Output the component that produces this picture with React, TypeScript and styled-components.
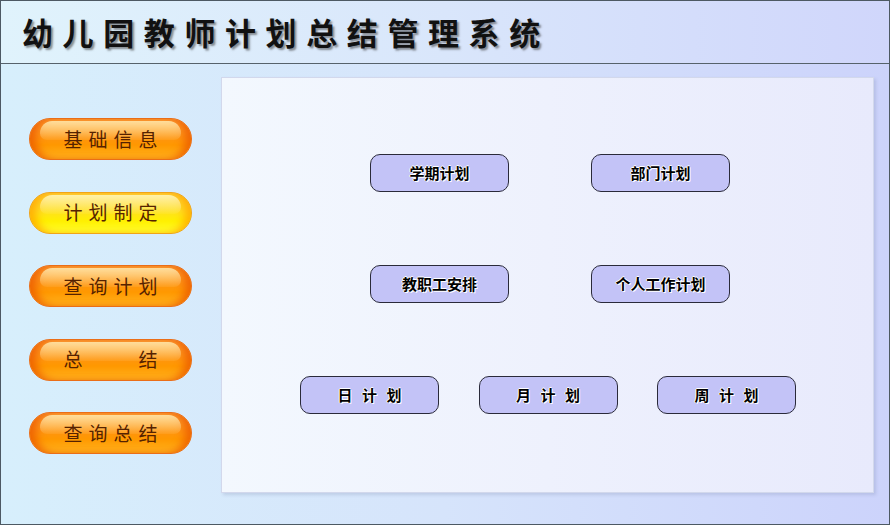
import { FC } from "react";
import styled, { createGlobalStyle } from "styled-components";

const GlobalStyle = createGlobalStyle`
  html, body {
    margin: 0;
    padding: 0;
    background: #ffffff;
  }
  * {
    box-sizing: border-box;
  }
`;

const Frame = styled.div`
  width: 890px;
  height: 525px;
  border: 1px solid #4d5963;
  display: flex;
  flex-direction: column;
  font-family: "Noto Sans CJK SC", "Noto Sans", sans-serif;
  overflow: hidden;
`;

const Header = styled.header`
  height: 63px;
  flex-shrink: 0;
  display: flex;
  align-items: center;
  padding-left: 21px;
  padding-bottom: 2px;
  background: linear-gradient(to right, #e0f3fc 0%, #d9e6fb 50%, #d0d6fb 100%);
  border-bottom: 1px solid #56626b;
`;

const Title = styled.h1`
  margin: 0;
  font-size: 31px;
  font-weight: 700;
  letter-spacing: 9.6px;
  color: #111;
  text-shadow: 2px 2px 2px rgba(60, 60, 60, 0.55);
`;

const Body = styled.div`
  flex: 1;
  display: flex;
  padding: 13px 15px 31px 28px;
  background: linear-gradient(to right, #d7effc 0%, #d6e4fb 50%, #ccd3fb 100%);
`;

const Menu = styled.nav`
  width: 163px;
  flex-shrink: 0;
  display: flex;
  flex-direction: column;
  gap: 31.5px;
  padding-top: 41px;
`;

const MenuButton = styled.button<{ active?: boolean }>`
  position: relative;
  width: 163px;
  height: 42px;
  border-radius: 21px;
  border: 1px solid ${({ active }) => (active ? "#f0a418" : "#ea6e18")};
  background: ${({ active }) =>
    active
      ? "linear-gradient(to bottom, #ffd23a 0%, #ffe020 45%, #fff000 70%, #ffff30 100%)"
      : "linear-gradient(to bottom, #ffa53a 0%, #ff9410 45%, #ff9800 65%, #ffb41e 100%)"};
  box-shadow: ${({ active }) =>
    active
      ? "inset 9px 0 9px -3px rgba(255, 165, 0, 0.8), inset -9px 0 9px -3px rgba(255, 165, 0, 0.8)"
      : "inset 9px 0 9px -3px rgba(235, 90, 0, 0.8), inset -9px 0 9px -3px rgba(235, 90, 0, 0.8)"};
  color: #552200;
  font-family: "Noto Sans CJK SC", sans-serif;
  font-size: 19px;
  letter-spacing: 6px;
  text-indent: 6px;
  padding: 0 0 2px;
  cursor: pointer;
  overflow: hidden;

  &::before {
    content: "";
    position: absolute;
    top: 2px;
    left: 10px;
    right: 10px;
    height: 48%;
    border-radius: 18px 18px 10px 10px;
    background: ${({ active }) =>
      active
        ? "linear-gradient(to bottom, rgba(255, 250, 200, 0.8), rgba(255, 240, 120, 0.1))"
        : "linear-gradient(to bottom, rgba(255, 234, 175, 0.85), rgba(255, 200, 110, 0.15))"};
  }

  span {
    position: relative;
  }
`;

const Panel = styled.main`
  flex: 1;
  margin-left: 29px;
  display: flex;
  flex-direction: column;
  gap: 73px;
  padding-top: 76px;
  background: linear-gradient(to right, #f3f8fe 0%, #eef1fd 50%, #e8eafc 100%);
  border: 1px solid #d2d8ec;
  box-shadow: 2px 2px 3px rgba(120, 130, 170, 0.25);
`;

const ButtonRow = styled.div<{ offset: number; spacing: number }>`
  display: flex;
  gap: ${({ spacing }) => spacing}px;
  padding-left: ${({ offset }) => offset}px;
`;

const PlanButton = styled.button<{ wide?: boolean }>`
  width: 139px;
  height: 38px;
  border-radius: 10px;
  border: 1px solid #2a2a3a;
  background: #c3c3f7;
  color: #000;
  font-family: "Noto Sans CJK SC", sans-serif;
  font-size: 15px;
  font-weight: 700;
  letter-spacing: ${({ wide }) => (wide ? "3px" : "0")};
  text-indent: ${({ wide }) => (wide ? "3px" : "0")};
  white-space: pre;
  text-shadow: 1px 1px 0 #fff, -1px 0 0 #fff, 0 -1px 0 #fff;
  padding: 0 0 1px;
  cursor: pointer;
`;

const menuItems = [
  { label: "基础信息" },
  { label: "计划制定", active: true },
  { label: "查询计划" },
  { label: "总\u3000\u3000结" },
  { label: "查询总结" },
];

const planRows = [
  { offset: 148, spacing: 82, wide: false, items: ["学期计划", "部门计划"] },
  { offset: 148, spacing: 82, wide: false, items: ["教职工安排", "个人工作计划"] },
  { offset: 78, spacing: 39.5, wide: true, items: ["日 计 划", "月 计 划", "周 计 划"] },
];

const App: FC = () => {
  return (
    <>
      <GlobalStyle />
      <Frame>
        <Header>
          <Title>幼儿园教师计划总结管理系统</Title>
        </Header>
        <Body>
          <Menu>
            {menuItems.map((item) => (
              <MenuButton key={item.label} active={item.active}>
                <span>{item.label}</span>
              </MenuButton>
            ))}
          </Menu>
          <Panel>
            {planRows.map((row, i) => (
              <ButtonRow key={i} offset={row.offset} spacing={row.spacing}>
                {row.items.map((label) => (
                  <PlanButton key={label} wide={row.wide}>
                    {label}
                  </PlanButton>
                ))}
              </ButtonRow>
            ))}
          </Panel>
        </Body>
      </Frame>
    </>
  );
};

export default App;
